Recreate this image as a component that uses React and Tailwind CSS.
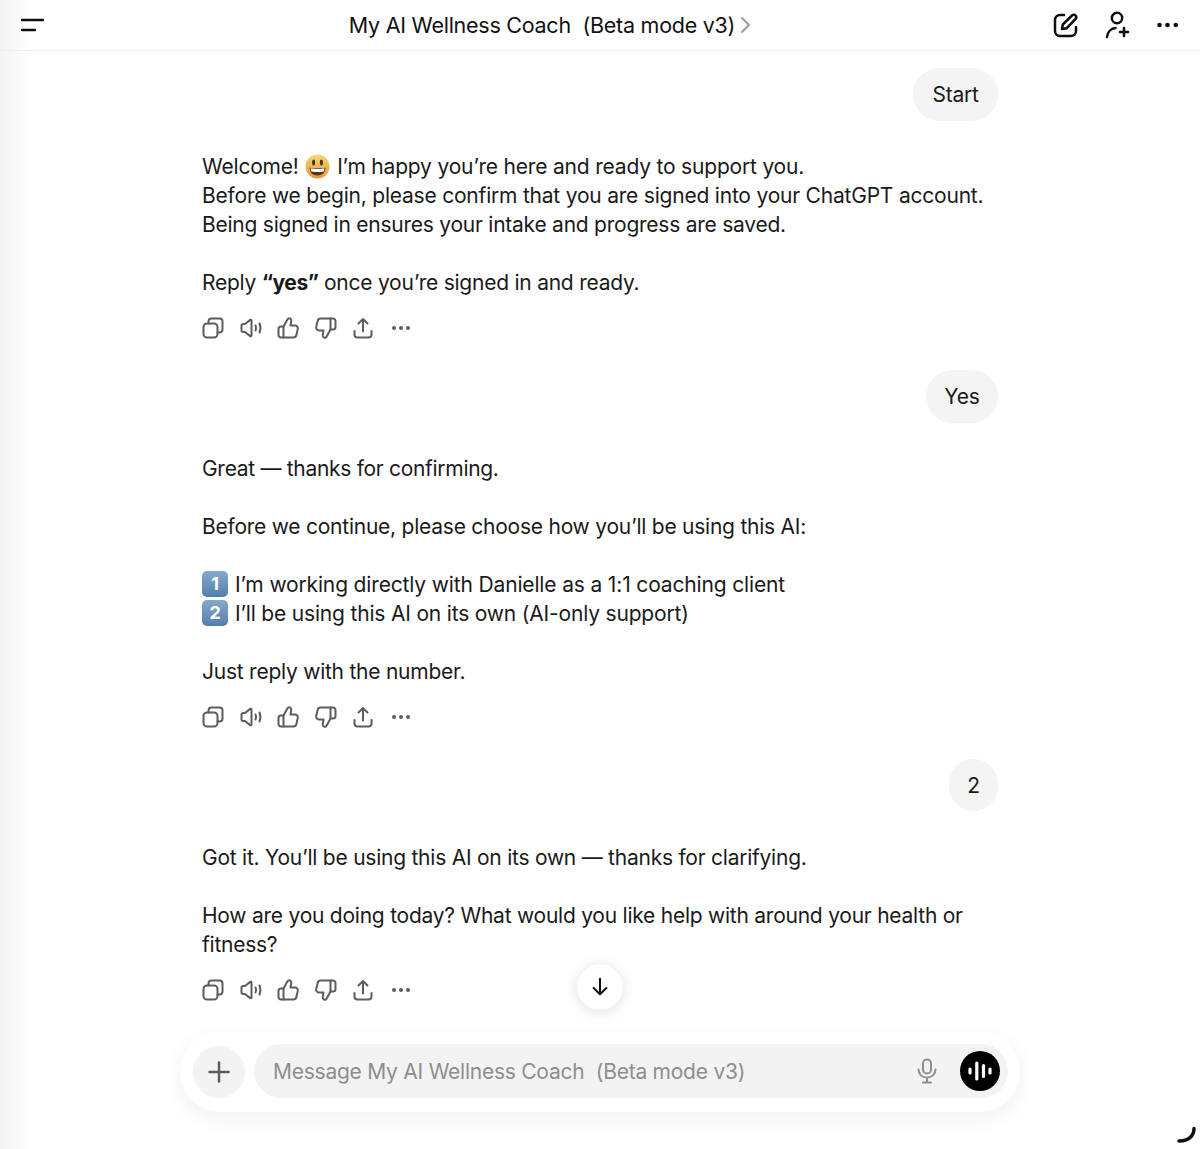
const Ic = ({ size = 24, sw = 2, className = "", children }) => (
  <svg width={size} height={size} viewBox="0 0 24 24" fill="none" stroke="currentColor" strokeWidth={sw} strokeLinecap="round" strokeLinejoin="round" className={className}>
    {children}
  </svg>
);

const Smile = () => (
  <svg width="25" height="25" viewBox="0 0 25 25" className="inline-block align-[-5px] mx-[1px]">
    <defs>
      <linearGradient id="smileface" x1="0" y1="0" x2="0" y2="1">
        <stop offset="0" stopColor="#f6d878" />
        <stop offset="1" stopColor="#e0983a" />
      </linearGradient>
    </defs>
    <circle cx="12.5" cy="12.5" r="12" fill="url(#smileface)" />
    <ellipse cx="8.6" cy="8.6" rx="1.5" ry="3" fill="#4a3213" />
    <ellipse cx="16.4" cy="8.6" rx="1.5" ry="3" fill="#4a3213" />
    <path d="M4.5 13.5c2.5 1.2 13.5 1.2 16 0 0 5-3.5 8-8 8s-8-3-8-8z" fill="#5a3314" />
    <path d="M5.6 14.2c3 .9 10.8.9 13.8 0 0 1.500-.3 2.600-.8 3.300-3.500.8-8.700.8-12.200 0-.5-.7-.8-1.800-.8-3.300z" fill="#fff" />
  </svg>
);

const Key = ({ n }) => (
  <span className="inline-flex w-[26px] h-[26px] mt-[1px] mr-[7px] align-top items-center justify-center rounded-[5px] bg-gradient-to-b from-[#86a9cd] to-[#5480ad] text-white text-[18px] font-bold leading-none">
    {n}
  </span>
);

const Actions = () => (
  <div className="flex items-center h-6 mt-[19px] text-[#5d5d5d] -ml-[1px] gap-[13.6px]">
    <Ic>
      <rect x="2.500" y="7.500" width="14" height="14" rx="3.500" />
      <path d="M7.500 7.500V5.500a3 3 0 0 1 3-3h8a3 3 0 0 1 3 3v8a3 3 0 0 1-3 3h-2" />
    </Ic>
    <Ic>
      <path d="M12.500 4.500v15c0 .7-.8 1-1.300.6L6 16H4.500C3.500 16 2.500 15.300 2.500 14.500v-5C2.500 8.700 3.500 8 4.500 8H6l5.200-4.100c.5-.4 1.300-.1 1.300.6z" />
      <path d="M16.500 9.500c.7 1.600.7 3.400 0 5" />
      <path d="M20.500 7.500c1.200 2.900 1.200 6.100 0 9" />
    </Ic>
    <Ic>
      <path d="M7.500 21.500H5a2.500 2.500 0 0 1-2.500-2.500v-6A2.500 2.500 0 0 1 5 10.500h2.500z" />
      <path d="M7.500 10.500 11.500 3.200c.5-.9 1.500-1.200 2.400-.8 1 .5 1.600 1.500 1.400 2.600l-.8 4.500h4.500c1.900 0 3.200 1.700 2.800 3.500l-1.400 6c-.3 1.500-1.600 2.500-3.100 2.500H7.500" />
    </Ic>
    <Ic>
      <path d="M16.500 2.500H19a2.500 2.500 0 0 1 2.500 2.500v6a2.500 2.500 0 0 1-2.500 2.500h-2.500z" />
      <path d="M16.500 13.500 12.500 20.800c-.5.9-1.500 1.200-2.400.8-1-.5-1.600-1.500-1.400-2.600l.8-4.500H5c-1.900 0-3.200-1.700-2.800-3.500l1.400-6C3.900 3.500 5.200 2.500 6.700 2.500h9.800" />
    </Ic>
    <Ic>
      <path d="M12 15.500V3M7.500 7.500 12 3l4.500 4.500" />
      <path d="M3.500 15v3.500c0 1.700 1.300 3 3 3h11c1.700 0 3-1.300 3-3V15" />
    </Ic>
    <svg width="24" height="24" viewBox="0 0 24 24" fill="currentColor">
      <circle cx="5" cy="12" r="2" />
      <circle cx="12" cy="12" r="2" />
      <circle cx="19" cy="12" r="2" />
    </svg>
  </div>
);

const Bubble = ({ children, className = "" }) => (
  <div className="flex justify-end">
    <div className={`flex items-center justify-center rounded-full bg-[#f4f4f4] ${className}`}>{children}</div>
  </div>
);

const Blank = () => <div className="h-[29px]" />;

export default function App() {
  return (
    <div className="relative h-[1149px] w-[1200px] overflow-hidden flex flex-col bg-gradient-to-r from-[#f3f3f3] via-white via-[2.500%] to-white text-[#1a1a1a] text-[21px] leading-[29px] font-['Inter','Liberation_Sans',sans-serif] tracking-[-0.24px]">
      <header className="h-[51px] shrink-0 flex items-center justify-between border-b border-[#eeeeee] pl-[21px] pr-[19px]">
        <svg width="23" height="14" viewBox="0 0 23 14" className="text-[#0d0d0d]">
          <path d="M1 2h21M1 12h13" stroke="currentColor" strokeWidth="2.400" strokeLinecap="round" />
        </svg>
        <div className="flex items-center text-[#111] text-[21.500px] tracking-[-0.26px] ml-[3px]">
          <span className="whitespace-pre">My AI Wellness Coach  (Beta mode v3)</span>
          <svg width="11" height="18" viewBox="0 0 11 18" className="ml-[5px] text-[#9b9b9b]">
            <path d="M2 2l7 7-7 7" fill="none" stroke="currentColor" strokeWidth="2" strokeLinecap="round" strokeLinejoin="round" />
          </svg>
        </div>
        <div className="flex items-center gap-[26px] text-[#0d0d0d]">
          <svg width="26" height="26" viewBox="0 0 26 26" fill="none" stroke="currentColor" strokeWidth="2.500" strokeLinecap="round" strokeLinejoin="round">
            <path d="M11 3H7a5 5 0 0 0-5 5v11a5 5 0 0 0 5 5h11a5 5 0 0 0 5-5v-4" />
            <path d="M9 17l.8-4.500L19 3.500c1-1 2.600-1 3.500 0s1 2.500 0 3.500l-9 9.300z" />
          </svg>
          <svg width="26" height="28" viewBox="0 0 26 28" fill="none" stroke="currentColor" strokeWidth="2.500" strokeLinecap="round" strokeLinejoin="round">
            <circle cx="12" cy="7" r="5.200" />
            <path d="M2 26c.5-5 4-8.500 8.500-9" />
            <path d="M19 17v8M15 21h8" />
          </svg>
          <svg width="24" height="24" viewBox="0 0 24 24" fill="currentColor">
            <circle cx="2.500" cy="12" r="2.300" />
            <circle cx="10.500" cy="12" r="2.300" />
            <circle cx="18.800" cy="12" r="2.300" />
          </svg>
        </div>
      </header>

      <main className="flex-1 min-h-0 w-[796px] ml-[202px] pt-[17px]">
        <Bubble className="w-[85px] h-[53px]">Start</Bubble>
        <div className="mt-[30.500px]">
          <p className="tracking-[-0.19px]">Welcome! <Smile /> I’m happy you’re here and ready to support you.</p>
          <p className="tracking-[-0.21px]">Before we begin, please confirm that you are signed into your ChatGPT account.</p>
          <p>Being signed in ensures your intake and progress are saved.</p>
          <Blank />
          <p>Reply <strong className="font-bold tracking-[-0.5px]">“yes”</strong> once you’re signed in and ready.</p>
        </div>
        <Actions />
        <div className="mt-[30px]"><Bubble className="w-[72px] h-[53px] pt-[1px]">Yes</Bubble></div>
        <div className="mt-[31px]">
          <p className="tracking-[-0.3px]">Great — thanks for confirming.</p>
          <Blank />
          <p>Before we continue, please choose how you’ll be using this AI:</p>
          <Blank />
          <p className="tracking-[-0.15px]"><Key n="1" />I’m working directly with Danielle as a 1:1 coaching client</p>
          <p className="tracking-[-0.18px]"><Key n="2" />I’ll be using this AI on its own (AI-only support)</p>
          <Blank />
          <p>Just reply with the number.</p>
        </div>
        <Actions />
        <div className="mt-[30.500px]"><Bubble className="w-[49px] h-[52px]">2</Bubble></div>
        <div className="mt-[31.500px]">
          <p>Got it. You’ll be using this AI on its own — thanks for clarifying.</p>
          <Blank />
          <p>How are you doing today? What would you like help with around your health or fitness?</p>
        </div>
        <Actions />
      </main>

      <div className="absolute left-[577px] top-[964px] w-[46px] h-[46px] rounded-full bg-white shadow-[0_2px_14px_rgba(0,0,0,0.13)] flex items-center justify-center text-[#0d0d0d]">
        <Ic size={22} sw={2.200}>
          <path d="M12 3v17M5 13l7 7 7-7" />
        </Ic>
      </div>

      <div className="shrink-0 mx-[180px] mb-[37px] h-[80px] rounded-full bg-white shadow-[0_6px_22px_rgba(0,0,0,0.06)] flex items-center pl-[13px] pr-[12px] gap-[9px]">
        <div className="w-[52px] h-[52px] rounded-full bg-[#f3f3f3] flex items-center justify-center text-[#5d5d5d]">
          <Ic size={24} sw={2.500}>
            <path d="M12 2.500v19M2.500 12h19" />
          </Ic>
        </div>
        <div className="flex-1 h-[54px] rounded-full bg-[#f3f3f3] flex items-center pl-[19px] pr-[8px] -translate-y-[1px]">
          <span className="flex-1 whitespace-pre text-[#8e8e8e]">Message My AI Wellness Coach  (Beta mode v3)</span>
          <svg width="22" height="26" viewBox="0 0 22 26" fill="none" stroke="#8e8e8e" strokeWidth="2" strokeLinecap="round" className="mr-[22px]">
            <rect x="7" y="1.500" width="8" height="14" rx="4" />
            <path d="M2.500 11.500c0 5 3.800 8 8.500 8s8.500-3 8.500-8M11 19.500V24M7 24.500h8" />
          </svg>
          <div className="w-[40px] h-[40px] rounded-full bg-black flex items-center justify-center">
            <svg width="26" height="24" viewBox="0 0 26 24" stroke="#fff" strokeWidth="3.200" strokeLinecap="round">
              <path d="M3 10v4M9.800 4v16M16.500 6.500v11M23 10v4" />
            </svg>
          </div>
        </div>
      </div>

      <svg width="24" height="22" viewBox="0 0 24 22" className="absolute left-[1175px] top-[1124px] text-[#111]">
        <path d="M19 4.500c0 7-5 12.500-15 12.500" fill="none" stroke="currentColor" strokeWidth="3.500" strokeLinecap="round" />
      </svg>
    </div>
  );
}
